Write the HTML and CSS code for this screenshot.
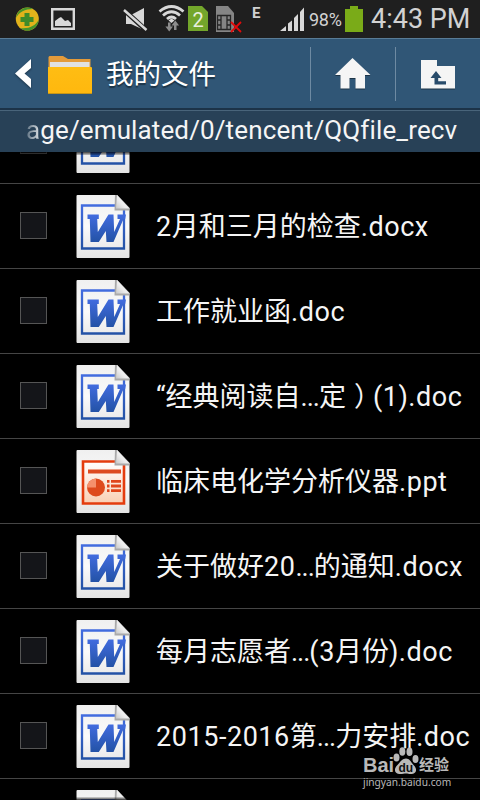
FILE: index.html
```html
<!DOCTYPE html>
<html lang="zh-CN">
<head>
    <meta charset="UTF-8">
    <meta name="viewport" content="width=device-width, initial-scale=1.0">
    <title>我的文件</title>
    <link rel="stylesheet" href="styles.css">
</head>
<body>
    <!-- shared icons -->
    <svg class="defs" width="0" height="0">
        <defs>
            <linearGradient id="paper" x1="0" y1="0" x2="0" y2="1">
                <stop offset="0" stop-color="#f0f0f0" />
                <stop offset="0.5" stop-color="#fafafa" />
                <stop offset="1" stop-color="#e4e4e4" />
            </linearGradient>
            <linearGradient id="blue" x1="0" y1="0" x2="0" y2="1">
                <stop offset="0" stop-color="#426cdf" />
                <stop offset="1" stop-color="#2352a6" />
            </linearGradient>
            <linearGradient id="peach" x1="0" y1="0" x2="0" y2="1">
                <stop offset="0" stop-color="#ffffff" />
                <stop offset="1" stop-color="#f9cfb4" />
            </linearGradient>
            <linearGradient id="fold" x1="0" y1="1" x2="1" y2="0">
                <stop offset="0" stop-color="#c8c8c8" />
                <stop offset="0.4" stop-color="#ededed" />
                <stop offset="1" stop-color="#ffffff" />
            </linearGradient>
            <symbol id="word" viewBox="0 0 54 64">
                <path d="M1.500 0H41L53.500 13V62a1 1 0 0 1-1 1H1.500a1 1 0 0 1-1-1V1a1 1 0 0 1 1-1z" fill="url(#paper)" />
                <path d="M6 10.500H48V53.500H6z" fill="none" stroke="url(#blue)" stroke-width="2.300" />
                <path d="M11.500 19.500H22.800V24H21.200L21.800 37L32.500 19.500H37.500L38.200 37L44 24H41.500V19.500H50L49.200 24H47.500L37.500 47H30.500L29.800 36L22.800 47H14.500L13.800 24H11.500z" fill="url(#blue)" />
                <path d="M39 0H41L53.500 13V15.500H38.500z" fill="#aaa" />
                <path d="M41 0L53.500 13.500H40z" fill="url(#fold)" />
            </symbol>
            <symbol id="ppt" viewBox="0 0 54 64">
                <path d="M1.500 0H41L53.500 13V62a1 1 0 0 1-1 1H1.500a1 1 0 0 1-1-1V1a1 1 0 0 1 1-1z" fill="url(#paper)" />
                <path d="M7 11.500H48V53.500H7z" fill="url(#peach)" stroke="#e43c0e" stroke-width="2.600" />
                <path d="M12 19.500H45V23.500H12z" fill="#dd4a20" />
                <circle cx="20" cy="37.500" r="9" fill="#de4a1d" />
                <path d="M20 37.500V28.500A9 9 0 0 0 11 37.500z" fill="#f5906c" />
                <path d="M31 30h2.500v2.800H31zM35 30h10v2.800H35zM31 34.600h2.500v2.800H31zM35 34.600h10v2.800H35zM31 39.200h2.500v2.800H31zM35 39.200h10v2.800H35z" fill="#e0451b" />
                <path d="M39 0H41L53.500 13V15.500H38.500z" fill="#aaa" />
                <path d="M41 0L53.500 13.500H40z" fill="url(#fold)" />
            </symbol>
        </defs>
    </svg>

    <div class="screen">
        <div class="status">
            <svg class="status-icons" width="305" height="38" viewBox="0 0 305 38">
                <!-- 360 ball -->
                <circle cx="27.300" cy="19" r="11.500" fill="#e2b31b" />
                <path d="M16 18A11.500 11.500 0 0 1 33 9C25 9 19 12 16 18zM38.700 20A11.500 11.500 0 0 1 20 28C29 29 35 26 38.700 20z" fill="#45942c" />
                <path d="M24.500 13h5v4h4v5h-4v4h-5v-4h-4v-5h4z" fill="#3f8b29" />
                <!-- picture -->
                <path d="M52.200 9.200H73.800V28.800H52.200z" fill="none" stroke="#d8d8d8" stroke-width="2.400" />
                <path d="M55 26V21l4-3 2-1 4 4 3-1 3 3v3z" fill="#d8d8d8" />
                <!-- muted -->
                <path d="M126 15h5l13-7v22l-13-6h-5z" fill="#d8d8d8" />
                <path d="M124 10L147 31" stroke="#1f1f1f" stroke-width="5" />
                <path d="M124 10L146.500 30" stroke="#d8d8d8" stroke-width="2.400" />
                <!-- wifi -->
                <g fill="none" stroke="#d8d8d8" stroke-width="2.800">
                    <path d="M159.500 11.500Q171.500 1.500 183.500 11.500" />
                    <path d="M163 15.500Q171.500 8 180 15.500" />
                    <path d="M167 19Q171.500 15 176 19" />
                </g>
                <path d="M168.500 20.500L171.500 18.500L174.500 20.500L171.500 23z" fill="#d8d8d8" />
                <path d="M168 22.500h2.500v4h2.500l-3.800 5-3.800-5h2.600zM174 30v-4.500h-2.500l3.800-5 3.800 5h-2.600v4.500z" fill="#8d8d8d" />
                <!-- sim 2 -->
                <path d="M188 6h14l6 6v19h-20z" fill="#73a62b" />
                <text x="198" y="26.500" class="sim-num">2</text>
                <!-- empty sim -->
                <path d="M216 6h12l6 7v19h-18z" fill="#858585" />
                <path d="M217.500 15.500h13v14h-13zM221 15.500v14M227 15.500v14M217.500 20h3.500M217.500 25h3.500M227 20h3.500M227 25h3.500" fill="none" stroke="#262626" stroke-width="1.300" />
                <path d="M231 22l10 10M241 22l-10 10" stroke="#e00b0b" stroke-width="1.800" />
                <text x="256.300" y="17.500" class="net">E</text>
                <!-- signal -->
                <path d="M280 31l6-5v5zM288 31v-7.500l4-3V31zM294 31V18l4-4v17zM300 31V12l4-4.500V31z" fill="#d8d8d8" />
            </svg>
            <span class="percent">98%</span>
            <svg class="battery" width="18" height="38" viewBox="0 0 18 38">
                <path d="M0 9h5V6h8v3h5v23H0z" fill="#7aab18" />
            </svg>
            <span class="time">4:43 PM</span>
        </div>

        <header class="header">
            <svg class="back" width="18" height="32" viewBox="0 0 18 32">
                <path d="M16 1L0 15.500L16 30V21L9.500 15.500L16 10z" fill="#fff" />
            </svg>
            <svg class="folder" width="46" height="40" viewBox="0 0 46 40">
                <linearGradient id="yellow" x1="0" y1="0" x2="0" y2="1">
                    <stop offset="0" stop-color="#ffbd13" />
                    <stop offset="1" stop-color="#ffb80e" />
                </linearGradient>
                <path d="M2.500 1H16l5 3H43.500v22h-42V2z" fill="#e49b3a" />
                <path d="M3 7H42.500V15H3z" fill="#e1e1e1" />
                <path d="M1 12H44a1 1 0 0 1 1 1V37.500a1 1 0 0 1-1 1H2a1 1 0 0 1-1-1z" fill="url(#yellow)" />
                <path d="M1 38.500H45" stroke="#c79516" />
            </svg>
            <h1 class="title">我的文件</h1>
            <div class="action">
                <svg class="glyph" width="38" height="34" viewBox="0 0 38 34">
                    <path d="M18.500 1L36.500 18H31V31.500H21.500V21H15.500V31.500H6.500V18H1z" fill="#f5f5f5" />
                </svg>
            </div>
            <div class="action">
                <svg class="glyph up" width="36" height="30" viewBox="0 0 36 30">
                    <path d="M1 0H17V6H35V28.500H1z" fill="#f5f5f5" />
                    <path d="M16 11L21.500 18H18.200V21.300H26V24.500H14.500V18H10.500z" fill="#294c6b" />
                </svg>
            </div>
        </header>

        <div class="path"><span class="cut">a</span>ge/emulated/0/tencent/QQfile_recv</div>

        <ul class="files">
            <li class="file">
                <span class="check"></span>
                <svg class="icon"><use href="#word" /></svg>
            </li>
            <li class="file">
                <span class="check"></span>
                <svg class="icon"><use href="#word" /></svg>
                <span class="name"><span class="latin">2</span>月和三月的检查<span class="latin">.docx</span></span>
            </li>
            <li class="file">
                <span class="check"></span>
                <svg class="icon"><use href="#word" /></svg>
                <span class="name">工作就业函<span class="latin">.doc</span></span>
            </li>
            <li class="file">
                <span class="check"></span>
                <svg class="icon"><use href="#word" /></svg>
                <span class="name">“经典阅读自<span class="dots">...</span>定<span class="paren">）</span><span class="latin">(1).doc</span></span>
            </li>
            <li class="file">
                <span class="check"></span>
                <svg class="icon"><use href="#ppt" /></svg>
                <span class="name">临床电化学分析仪器<span class="latin">.ppt</span></span>
            </li>
            <li class="file">
                <span class="check"></span>
                <svg class="icon"><use href="#word" /></svg>
                <span class="name">关于做好<span class="latin">20</span><span class="dots">...</span>的通知<span class="latin">.docx</span></span>
            </li>
            <li class="file">
                <span class="check"></span>
                <svg class="icon"><use href="#word" /></svg>
                <span class="name">每月志愿者<span class="dots">...</span><span class="latin">(3</span>月份<span class="latin">).doc</span></span>
            </li>
            <li class="file">
                <span class="check"></span>
                <svg class="icon"><use href="#word" /></svg>
                <span class="name"><span class="latin">2015-2016</span>第<span class="dots">...</span>力安排<span class="latin">.doc</span></span>
            </li>
            <li class="file">
                <span class="check"></span>
                <svg class="icon"><use href="#word" /></svg>
            </li>
        </ul>

        <div class="watermark">
            <div class="brand">
                <span class="bai">Bai</span>
                <svg class="paw" width="26" height="28" viewBox="0 0 26 28">
                    <g fill="#b9b9b9">
                        <ellipse cx="3.500" cy="10.500" rx="3" ry="4" />
                        <ellipse cx="9.300" cy="4.500" rx="3" ry="4.300" />
                        <ellipse cx="16.500" cy="4.800" rx="3" ry="4.300" />
                        <ellipse cx="22.500" cy="12" rx="3" ry="4" />
                        <path d="M13 11.500c4 0 5 4 8 7s3 8-2 8.500c-3 .300-4-.500-6-.500s-4 .800-7 .500c-5-.500-5-5.500-2-8.500s5-7 9-7z" />
                    </g>
                    <text x="12.800" y="25" class="du">du</text>
                </svg>
                <span class="jingyan">经验</span>
            </div>
            <div class="url">jingyan.baidu.com</div>
        </div>
    </div>
</body>
</html>
```

FILE: styles.css
```css
* {
  box-sizing: border-box;
}

body {
  margin: 0;
  background: #000;
  color: #f5f5f5;
  font-family: Roboto, "Noto Sans CJK SC", sans-serif;
}

.defs {
  position: absolute;
}

.screen {
  position: relative;
  display: flex;
  flex-direction: column;
  width: 480px;
  height: 800px;
  overflow: hidden;
}

/* status bar */
.status {
  display: flex;
  align-items: center;
  flex: none;
  height: 38px;
  background: #1f1f1f;
  color: #d2d2d2;
  white-space: nowrap;
}

.status-icons {
  flex: none;
}

.sim-num {
  fill: #e8efdc;
  font-size: 20px;
  text-anchor: middle;
}

.net {
  fill: #d0d0d0;
  font-size: 15px;
  font-weight: bold;
  text-anchor: middle;
}

.percent {
  width: 36px;
  margin-left: 4px;
  font-size: 18px;
  letter-spacing: -0.3px;
}

.battery {
  flex: none;
}

.time {
  margin-left: 8px;
  font-size: 27px;
}

/* title bar */
.header {
  display: flex;
  flex: none;
  height: 72px;
  background: #305676;
  border-top: 1px solid #597c96;
  border-bottom: 2px solid #1c3348;
}

.back {
  margin: 19px 0 0 15px;
  filter: drop-shadow(0 1px 1px #1c3447);
}

.folder {
  margin: 16px 0 0 14px;
}

.title {
  flex: 1;
  margin: 0 0 0 13px;
  font-size: 27.5px;
  font-weight: 400;
  line-height: 71px;
  color: #fff;
  text-shadow: 0 2px 1px #1c3447;
}

.action {
  position: relative;
  display: flex;
  align-items: center;
  justify-content: center;
  width: 85px;
}

.action::before {
  content: "";
  position: absolute;
  left: 0;
  top: 8px;
  width: 1px;
  height: 54px;
  background: #6e8aa2;
}

.glyph {
  filter: drop-shadow(0 1px 0 #1c3447);
}

.up {
  margin-top: 3px;
}

.path {
  flex: none;
  height: 42px;
  padding-left: 26px;
  background: #284157;
  border-top: 1px solid #49647a;
  font-size: 26px;
  line-height: 38px;
  letter-spacing: 0.13px;
  white-space: nowrap;
}

.cut {
  color: transparent;
  background: linear-gradient(90deg, #5b6f80, #dfe3e6);
  background-clip: text;
  -webkit-background-clip: text;
}

/* file list, scrolled part of a row down */
.files {
  position: relative;
  flex: 1;
  display: flex;
  flex-direction: column;
  min-height: 0;
  margin: 0;
  padding: 0;
  list-style: none;
  overflow: hidden;
}

/* edge fades of the scroll area */
.files::before,
.files::after {
  content: "";
  position: absolute;
  left: 0;
  right: 0;
  height: 3px;
  z-index: 1;
}

.files::before {
  top: 0;
  background: linear-gradient(rgba(0, 0, 0, 0.75), rgba(0, 0, 0, 0.2));
}

.files::after {
  bottom: 0;
  background: linear-gradient(rgba(0, 0, 0, 0.1), rgba(0, 0, 0, 0.8));
}

.file {
  display: flex;
  flex: none;
  height: 85px;
  border-bottom: 1px solid #454545;
  padding-left: 20px;
}

.file:first-child {
  margin-top: -53px;
}

.check {
  width: 27px;
  height: 27px;
  margin-top: 28px;
  background: #141519;
  border: 1px solid #555;
}

.icon {
  width: 54px;
  height: 64px;
  margin: 11px 0 0 29px;
}

.name {
  margin-left: 26px;
  font-size: 27px;
  line-height: 86px;
  white-space: nowrap;
}

.latin {
  letter-spacing: 0.55px;
}

.dots {
  letter-spacing: -1px;
}

.paren {
  margin-left: 8px;
  margin-right: -8px;
}

.watermark {
  position: absolute;
  left: 363px;
  top: 746px;
  width: 90px;
  color: #b9b9b9;
}

.brand {
  display: flex;
  align-items: flex-end;
  height: 29px;
}

.bai {
  width: 30px;
  font: bold 20px/20px "Liberation Sans", Arial, sans-serif;
}

.paw {
  flex: none;
}

.du {
  fill: #111;
  font: bold 12px "Liberation Sans", Arial, sans-serif;
  text-anchor: middle;
}

.jingyan {
  font-size: 15px;
  font-weight: bold;
  line-height: 20px;
}

.url {
  font: 10.2px/14px "Noto Sans", sans-serif;
}
```
